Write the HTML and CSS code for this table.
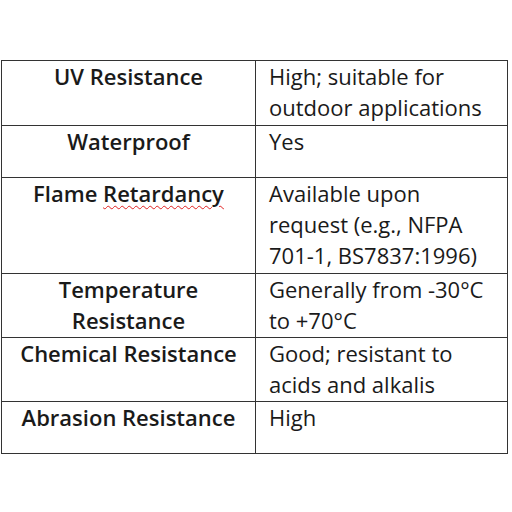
FILE: index.html
```html
<!DOCTYPE html>
<html>
<head>
<meta charset="utf-8">
<link rel="stylesheet" href="styles.css">
</head>
<body>
<table class="spec">
  <tr class="r1"><th>UV Resistance</th><td>High; suitable for<br>outdoor applications</td></tr>
  <tr class="r2"><th>Waterproof</th><td>Yes</td></tr>
  <tr class="r3"><th>Flame <span class="typo">Retardancy</span></th><td>Available upon<br>request (e.g., NFPA<br>701-1, BS7837:1996)</td></tr>
  <tr class="r4"><th>Temperature<br>Resistance</th><td>Generally from -30°C<br>to +70°C</td></tr>
  <tr class="r5"><th>Chemical Resistance</th><td>Good; resistant to<br>acids and alkalis</td></tr>
  <tr class="r6"><th>Abrasion Resistance</th><td>High</td></tr>
</table>
</body>
</html>
```
FILE: styles.css
```css
html, body {
  margin: 0;
  padding: 0;
  background: #fff;
}
body {
  font-family: "Open Sans", Lato, sans-serif;
  font-size: 22px;
  color: #1a1a1a;
}
.spec {
  border-collapse: collapse;
  margin: 60px 0 0 1px;
  width: 507px;
  table-layout: fixed;
}
.spec th, .spec td {
  border: 1px solid #333;
  vertical-align: top;
  line-height: 31px;
  padding: 0;
}
.spec th {
  width: 253px;
  font-weight: 600;
  text-align: center;
}
.spec td {
  padding-left: 13px;
  font-weight: normal;
}
.r1 { height: 65px; }
.r2 { height: 52px; }
.r3 { height: 96px; }
.r4 { height: 64px; }
.r5 { height: 64px; }
.r6 { height: 52px; }
.typo {
  text-decoration: underline wavy #e02020;
  text-decoration-thickness: 1px;
  text-underline-offset: 3px;
}
```
